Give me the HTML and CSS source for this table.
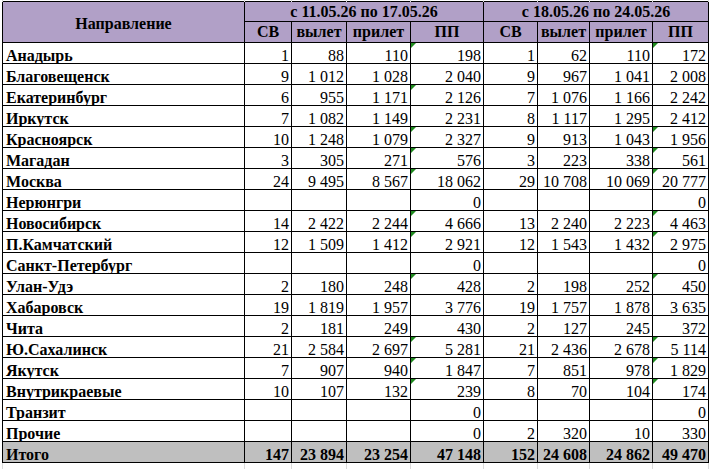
FILE: index.html
```html
<!DOCTYPE html>
<html lang="ru">
<head>
<meta charset="utf-8">
<title>Направление</title>
<link rel="stylesheet" href="styles.css">
</head>
<body>
<table class="sheet">
  <colgroup>
    <col class="c-name"><col class="c-sv1"><col class="c-out1"><col class="c-in1"><col class="c-pp1"><col class="c-sv2"><col class="c-out2"><col class="c-in2"><col class="c-pp2">
  </colgroup>
  <thead>
    <tr class="grid-top"><td></td><td></td><td></td><td></td><td></td><td></td><td></td><td></td><td></td></tr>
    <tr class="h1">
      <th rowspan="2" class="hname">Направление</th>
      <th colspan="4">с 11.05.26 по 17.05.26</th>
      <th colspan="4">с 18.05.26 по 24.05.26</th>
    </tr>
    <tr class="h2">
      <th>СВ</th><th>вылет</th><th>прилет</th><th>ПП</th>
      <th>СВ</th><th>вылет</th><th>прилет</th><th>ПП</th>
    </tr>
  </thead>
  <tbody>
    <tr><th>Анадырь</th><td>1</td><td>88</td><td>110</td><td class="w">198</td><td>1</td><td>62</td><td>110</td><td class="w">172</td></tr>
    <tr><th>Благовещенск</th><td>9</td><td>1&nbsp;012</td><td>1&nbsp;028</td><td>2&nbsp;040</td><td>9</td><td>967</td><td>1&nbsp;041</td><td>2&nbsp;008</td></tr>
    <tr><th>Екатеринбург</th><td>6</td><td>955</td><td>1&nbsp;171</td><td class="w">2&nbsp;126</td><td>7</td><td>1&nbsp;076</td><td>1&nbsp;166</td><td>2&nbsp;242</td></tr>
    <tr><th>Иркутск</th><td>7</td><td>1&nbsp;082</td><td>1&nbsp;149</td><td>2&nbsp;231</td><td>8</td><td>1&nbsp;117</td><td>1&nbsp;295</td><td>2&nbsp;412</td></tr>
    <tr><th>Красноярск</th><td>10</td><td>1&nbsp;248</td><td>1&nbsp;079</td><td class="w">2&nbsp;327</td><td>9</td><td>913</td><td>1&nbsp;043</td><td class="w">1&nbsp;956</td></tr>
    <tr><th>Магадан</th><td>3</td><td>305</td><td>271</td><td class="w">576</td><td>3</td><td>223</td><td>338</td><td class="w">561</td></tr>
    <tr><th>Москва</th><td>24</td><td>9&nbsp;495</td><td>8&nbsp;567</td><td class="w">18&nbsp;062</td><td>29</td><td>10&nbsp;708</td><td>10&nbsp;069</td><td class="w">20&nbsp;777</td></tr>
    <tr><th>Нерюнгри</th><td></td><td></td><td></td><td>0</td><td></td><td></td><td></td><td>0</td></tr>
    <tr><th>Новосибирск</th><td>14</td><td>2&nbsp;422</td><td>2&nbsp;244</td><td class="w">4&nbsp;666</td><td>13</td><td>2&nbsp;240</td><td>2&nbsp;223</td><td class="w">4&nbsp;463</td></tr>
    <tr><th>П.Камчатский</th><td>12</td><td>1&nbsp;509</td><td>1&nbsp;412</td><td class="w">2&nbsp;921</td><td>12</td><td>1&nbsp;543</td><td>1&nbsp;432</td><td class="w">2&nbsp;975</td></tr>
    <tr><th>Санкт-Петербург</th><td></td><td></td><td></td><td>0</td><td></td><td></td><td></td><td>0</td></tr>
    <tr><th>Улан-Удэ</th><td>2</td><td>180</td><td>248</td><td class="w">428</td><td>2</td><td>198</td><td>252</td><td class="w">450</td></tr>
    <tr><th>Хабаровск</th><td>19</td><td>1&nbsp;819</td><td>1&nbsp;957</td><td>3&nbsp;776</td><td>19</td><td>1&nbsp;757</td><td>1&nbsp;878</td><td>3&nbsp;635</td></tr>
    <tr><th>Чита</th><td>2</td><td>181</td><td>249</td><td>430</td><td>2</td><td>127</td><td>245</td><td>372</td></tr>
    <tr><th>Ю.Сахалинск</th><td>21</td><td>2&nbsp;584</td><td>2&nbsp;697</td><td class="w">5&nbsp;281</td><td>21</td><td>2&nbsp;436</td><td>2&nbsp;678</td><td class="w">5&nbsp;114</td></tr>
    <tr><th>Якутск</th><td>7</td><td>907</td><td>940</td><td class="w">1&nbsp;847</td><td>7</td><td>851</td><td>978</td><td class="w">1&nbsp;829</td></tr>
    <tr><th>Внутрикраевые</th><td>10</td><td>107</td><td>132</td><td class="w">239</td><td>8</td><td>70</td><td>104</td><td class="w">174</td></tr>
    <tr><th>Транзит</th><td></td><td></td><td></td><td>0</td><td></td><td></td><td></td><td>0</td></tr>
    <tr><th>Прочие</th><td></td><td></td><td></td><td>0</td><td>2</td><td>320</td><td>10</td><td>330</td></tr>
    <tr class="total"><th>Итого</th><td>147</td><td>23&nbsp;894</td><td>23&nbsp;254</td><td>47&nbsp;148</td><td>152</td><td>24&nbsp;608</td><td>24&nbsp;862</td><td>49&nbsp;470</td></tr>
    <tr class="grid-bottom"><td></td><td></td><td></td><td></td><td></td><td></td><td></td><td></td><td></td></tr>
  </tbody>
</table>
</body>
</html>
```

FILE: styles.css
```css
html, body {
  margin: 0;
  padding: 0;
  background: #ffffff;
}

body {
  font-family: "Liberation Serif", "Times New Roman", serif;
  font-size: 16px;
  color: #000000;
}

.sheet {
  border-collapse: collapse;
  table-layout: fixed;
  width: 706px;
  margin: 0 0 0 2px;
}

.c-name { width: 242px; }
.c-sv1 { width: 47px; }
.c-out1 { width: 55px; }
.c-in1 { width: 64px; }
.c-pp1 { width: 73px; }
.c-sv2 { width: 54px; }
.c-out2 { width: 52px; }
.c-in2 { width: 63px; }
.c-pp2 { width: 56px; }

.sheet th,
.sheet td {
  border: 1px solid #000000;
  padding: 0 2px 0 3px;
  height: 20px;
  line-height: 15px;
  vertical-align: bottom;
  white-space: nowrap;
  overflow: hidden;
}

.sheet td {
  text-align: right;
  position: relative;
}

.sheet tbody th {
  text-align: left;
  font-weight: bold;
  padding-left: 3px;
}

.sheet thead th {
  background: #b1a0c7;
  text-align: center;
  font-weight: bold;
  padding: 0 2px;
  line-height: 18px;
  vertical-align: middle;
}

.sheet .h1 th { height: 19px; }
.sheet .h2 th { height: 20px; }

.sheet thead th.hname {
  padding-top: 3px;
}

.total th,
.total td {
  background: #bfbfbf;
  font-weight: bold;
}

.grid-top td {
  height: 1px;
  line-height: 1px;
  padding: 0;
  border: none;
  border-left: 1px solid #dadada;
  border-right: 1px solid #dadada;
}

.grid-bottom td {
  height: 6px;
  line-height: 6px;
  padding: 0;
  border: none;
  border-left: 1px solid #dadada;
  border-right: 1px solid #dadada;
  border-top: 1px solid #000000;
}

.sheet td.w::before {
  content: "";
  position: absolute;
  left: 0;
  top: 0;
  width: 0;
  height: 0;
  border-top: 5px solid #1f8a1f;
  border-right: 5px solid transparent;
}
```
